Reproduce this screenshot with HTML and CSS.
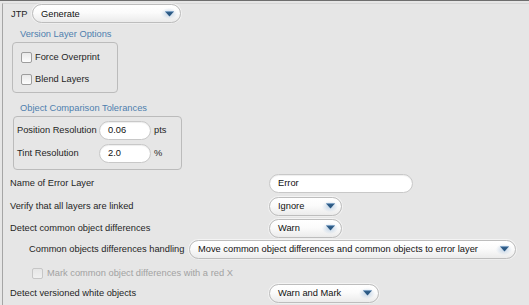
FILE: index.html
```html
<!DOCTYPE html>
<html>
<head>
<meta charset="utf-8">
<link rel="stylesheet" href="styles.css">
</head>
<body>
<div class="topline"></div>
<div class="panel">
  <div class="row-top">
    <span class="jtp">JTP</span>
    <div class="select w-generate"><span>Generate</span><span class="arrow"><svg width="9" height="6" viewBox="0 0 9 6"><polygon points="0,0.5 9,0.5 4.5,5.5" fill="#2b5984"/><line x1="0.5" y1="0.6" x2="8.5" y2="0.6" stroke="#7ea3c6" stroke-width="1"/></svg></span></div>
  </div>

  <div class="section-title">Version Layer Options</div>
  <div class="group g1">
    <div class="check-row"><span class="box"></span><span>Force Overprint</span></div>
    <div class="check-row"><span class="box"></span><span>Blend Layers</span></div>
  </div>

  <div class="section-title t2">Object Comparison Tolerances</div>
  <div class="group g2">
    <div class="field-row"><span class="field-label">Position Resolution</span><span class="input num">0.06</span><span class="unit">pts</span></div>
    <div class="field-row"><span class="field-label">Tint Resolution</span><span class="input num">2.0</span><span class="unit">%</span></div>
  </div>

  <div class="opt-row r1"><span class="opt-label">Name of Error Layer</span><span class="input w-error">Error</span></div>
  <div class="opt-row r2"><span class="opt-label">Verify that all layers are linked</span><div class="select w-short"><span>Ignore</span><span class="arrow"><svg width="9" height="6" viewBox="0 0 9 6"><polygon points="0,0.5 9,0.5 4.5,5.5" fill="#2b5984"/><line x1="0.5" y1="0.6" x2="8.5" y2="0.6" stroke="#7ea3c6" stroke-width="1"/></svg></span></div></div>
  <div class="opt-row r3"><span class="opt-label">Detect common object differences</span><div class="select w-short"><span>Warn</span><span class="arrow"><svg width="9" height="6" viewBox="0 0 9 6"><polygon points="0,0.5 9,0.5 4.5,5.5" fill="#2b5984"/><line x1="0.5" y1="0.6" x2="8.5" y2="0.6" stroke="#7ea3c6" stroke-width="1"/></svg></span></div></div>
  <div class="opt-row r4"><span class="indent-label">Common objects differences handling</span><div class="select w-move"><span>Move common object differences and common objects to error layer</span><span class="arrow"><svg width="9" height="6" viewBox="0 0 9 6"><polygon points="0,0.5 9,0.5 4.5,5.5" fill="#2b5984"/><line x1="0.5" y1="0.6" x2="8.5" y2="0.6" stroke="#7ea3c6" stroke-width="1"/></svg></span></div></div>
  <div class="opt-row r5 disabled"><span class="box box-disabled"></span><span>Mark common object differences with a red X</span></div>
  <div class="opt-row r6"><span class="opt-label">Detect versioned white objects</span><div class="select w-wam"><span>Warn and Mark</span><span class="arrow"><svg width="9" height="6" viewBox="0 0 9 6"><polygon points="0,0.5 9,0.5 4.5,5.5" fill="#2b5984"/><line x1="0.5" y1="0.6" x2="8.5" y2="0.6" stroke="#7ea3c6" stroke-width="1"/></svg></span></div></div>
</div>
</body>
</html>
```

FILE: styles.css
```css
html, body {
  margin: 0;
  padding: 0;
}
body {
  width: 529px;
  height: 305px;
  overflow: hidden;
  background: #e6e6e6;
  font-family: "Liberation Sans", Arial, sans-serif;
  font-size: 9.3px;
  color: #1f1f1f;
}
.topline {
  height: 1px;
  background: #6e6e6e;
}
.panel {
  margin-top: 2px;
  margin-left: 2px;
  border-top: 1px solid #d6d6d6;
  border-left: 1px solid #a5a5a5;
  padding-left: 7px;
  height: 302px;
  box-sizing: border-box;
}
.row-top {
  display: flex;
  align-items: center;
  height: 19px;
}
.jtp {
  margin-left: 1px;
  width: 21px;
}
.select {
  display: flex;
  align-items: center;
  justify-content: space-between;
  box-sizing: border-box;
  height: 19px;
  padding-left: 8px;
  border: 1px solid #bdbdbd;
  border-radius: 10px;
  background: linear-gradient(#ffffff 0%, #fbfbfb 45%, #ebebeb 100%);
  box-shadow: 0 0 0 1px rgba(255, 255, 255, 0.55), 0 1px 1px rgba(0, 0, 0, 0.06);
  color: #111;
  white-space: nowrap;
}
.arrow {
  width: 16px;
  height: 11px;
  margin-right: 3px;
  display: flex;
  align-items: center;
  justify-content: center;
  background: radial-gradient(ellipse at center, rgba(185, 206, 228, 0.85) 0%, rgba(255, 255, 255, 0) 72%);
}
.arrow svg {
  display: block;
}
.w-generate { width: 149px; }
.w-error { width: 144px; }
.w-short { width: 73px; }
.w-move { width: 327px; }
.w-wam { width: 110px; }

.section-title {
  color: #4f7fae;
  line-height: 12px;
  margin-left: 10px;
  margin-top: 5px;
}
.t2 {
  margin-top: 9px;
}
.group {
  border: 1px solid #bbbbbb;
  border-radius: 4px;
  box-sizing: border-box;
}
.g1 {
  margin-top: 2px;
  margin-left: 2px;
  width: 106px;
  height: 51px;
  padding: 3px 0 0 8px;
}
.check-row {
  display: flex;
  align-items: center;
  height: 22px;
}
.box {
  width: 11px;
  height: 11px;
  box-sizing: border-box;
  border: 1px solid #9d9d9d;
  border-radius: 2px;
  background: linear-gradient(#e9e9e9, #fdfdfd);
  margin-right: 3px;
  flex: none;
}
.g2 {
  margin-top: 2px;
  margin-left: 3px;
  width: 169px;
  height: 54px;
  padding: 3px 0 0 3px;
}
.field-row {
  display: flex;
  align-items: center;
  height: 20px;
}
.field-row + .field-row {
  margin-top: 3px;
}
.field-label {
  width: 82px;
}
.input {
  display: flex;
  align-items: center;
  box-sizing: border-box;
  height: 19px;
  padding-left: 8px;
  border: 1px solid #c8c8c8;
  border-radius: 10px;
  background: #ffffff;
  box-shadow: inset 0 1px 1px rgba(0, 0, 0, 0.07);
  color: #111;
}
.num {
  width: 52px;
}
.unit {
  margin-left: 3px;
}
.opt-row {
  display: flex;
  align-items: center;
  height: 20px;
}
.r1 { margin-top: 3px; }
.r2 { margin-top: 3px; }
.r3 { margin-top: 2px; }
.r4 { margin-top: 1px; }
.r5 { margin-top: 4px; }
.r6 { margin-top: 0; }
.opt-label {
  width: 259px;
}
.indent-label {
  margin-left: 19px;
  width: 160px;
}
.disabled {
  color: #a2a2a2;
}
.box-disabled {
  margin-left: 22px;
  margin-right: 4px;
  border-color: #c6c6c6;
  background: linear-gradient(#e6e6e6, #f0f0f0);
}
```
